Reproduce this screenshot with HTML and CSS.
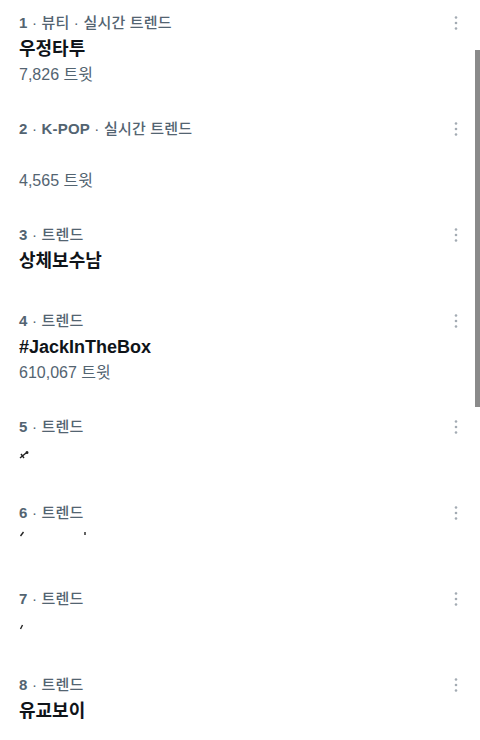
FILE: index.html
```html
<!DOCTYPE html>
<html lang="ko">
<head>
  <meta charset="UTF-8">
  <meta name="viewport" content="width=device-width, initial-scale=1.0">
  <title>트렌드</title>
  <link rel="stylesheet" href="styles.css">
</head>
<body>
  <ul class="trends">
    <li class="trend">
      <div class="trend-body">
        <div class="trend-meta"><span class="rank">1</span> · 뷰티 · 실시간 트렌드</div>
        <div class="trend-name">우정타투</div>
        <div class="trend-count">7,826 트윗</div>
      </div>
      <button class="more" aria-label="더 보기">
        <svg viewBox="0 0 6 16" width="6" height="16"><circle cx="3" cy="2.5" r="1.3"/><circle cx="3" cy="8" r="1.3"/><circle cx="3" cy="13.5" r="1.3"/></svg>
      </button>
    </li>

    <li class="trend">
      <div class="trend-body">
        <div class="trend-meta"><span class="rank">2</span> · <span class="rank">K-POP</span> · 실시간 트렌드</div>
        <div class="trend-name"></div>
        <div class="trend-count">4,565 트윗</div>
      </div>
      <button class="more" aria-label="더 보기">
        <svg viewBox="0 0 6 16" width="6" height="16"><circle cx="3" cy="2.5" r="1.3"/><circle cx="3" cy="8" r="1.3"/><circle cx="3" cy="13.5" r="1.3"/></svg>
      </button>
    </li>

    <li class="trend">
      <div class="trend-body">
        <div class="trend-meta"><span class="rank">3</span> · 트렌드</div>
        <div class="trend-name">상체보수남</div>
      </div>
      <button class="more" aria-label="더 보기">
        <svg viewBox="0 0 6 16" width="6" height="16"><circle cx="3" cy="2.5" r="1.3"/><circle cx="3" cy="8" r="1.3"/><circle cx="3" cy="13.5" r="1.3"/></svg>
      </button>
    </li>

    <li class="trend">
      <div class="trend-body">
        <div class="trend-meta"><span class="rank">4</span> · 트렌드</div>
        <div class="trend-name">#JackInTheBox</div>
        <div class="trend-count">610,067 트윗</div>
      </div>
      <button class="more" aria-label="더 보기">
        <svg viewBox="0 0 6 16" width="6" height="16"><circle cx="3" cy="2.5" r="1.3"/><circle cx="3" cy="8" r="1.3"/><circle cx="3" cy="13.5" r="1.3"/></svg>
      </button>
    </li>

    <li class="trend">
      <div class="trend-body">
        <div class="trend-meta"><span class="rank">5</span> · 트렌드</div>
        <div class="trend-name">
          <svg class="scrap" viewBox="0 0 80 32" width="80" height="32"><path d="M1 21 L7 16 M2 17 L5 21" /><circle cx="8" cy="15.5" r="0.8"/></svg>
        </div>
      </div>
      <button class="more" aria-label="더 보기">
        <svg viewBox="0 0 6 16" width="6" height="16"><circle cx="3" cy="2.5" r="1.3"/><circle cx="3" cy="8" r="1.3"/><circle cx="3" cy="13.5" r="1.3"/></svg>
      </button>
    </li>

    <li class="trend">
      <div class="trend-body">
        <div class="trend-meta"><span class="rank">6</span> · 트렌드</div>
        <div class="trend-name">
          <svg class="scrap" viewBox="0 0 80 32" width="80" height="32"><path d="M1.5 13 L4.5 9" /><path d="M66 9 L66 12" /></svg>
        </div>
      </div>
      <button class="more" aria-label="더 보기">
        <svg viewBox="0 0 6 16" width="6" height="16"><circle cx="3" cy="2.5" r="1.3"/><circle cx="3" cy="8" r="1.3"/><circle cx="3" cy="13.5" r="1.3"/></svg>
      </button>
    </li>

    <li class="trend">
      <div class="trend-body">
        <div class="trend-meta"><span class="rank">7</span> · 트렌드</div>
        <div class="trend-name">
          <svg class="scrap" viewBox="0 0 80 32" width="80" height="32"><path d="M1.5 20 L3.5 16" /></svg>
        </div>
      </div>
      <button class="more" aria-label="더 보기">
        <svg viewBox="0 0 6 16" width="6" height="16"><circle cx="3" cy="2.5" r="1.3"/><circle cx="3" cy="8" r="1.3"/><circle cx="3" cy="13.5" r="1.3"/></svg>
      </button>
    </li>

    <li class="trend">
      <div class="trend-body">
        <div class="trend-meta"><span class="rank">8</span> · 트렌드</div>
        <div class="trend-name">유교보이</div>
      </div>
      <button class="more" aria-label="더 보기">
        <svg viewBox="0 0 6 16" width="6" height="16"><circle cx="3" cy="2.5" r="1.3"/><circle cx="3" cy="8" r="1.3"/><circle cx="3" cy="13.5" r="1.3"/></svg>
      </button>
    </li>
  </ul>

  <div class="scrollbar"></div>
</body>
</html>
```

FILE: styles.css
```css
body {
  margin: 0;
  background: #fff;
  font-family: "Liberation Sans", "Noto Sans CJK KR", sans-serif;
  color: #0f1419;
  overflow: hidden;
}
.trends {
  list-style: none;
  margin: 0;
  padding: 0;
}
.trend {
  display: flex;
  align-items: flex-start;
  padding: 13px 20px 21px 19px;
}
.trend-body {
  flex: 1;
}
.trend-meta {
  font-size: 15px;
  line-height: 20px;
  font-weight: 500;
  letter-spacing: 0.2px;
  color: #536471;
}
.rank {
  font-weight: 700;
}
.trend-name {
  font-size: 18px;
  line-height: 32px;
  height: 32px;
  font-weight: 700;
  color: #0f1419;
}
.trend-count {
  font-size: 16px;
  line-height: 20px;
  color: #536471;
}
.scrap {
  display: block;
  stroke: #222;
  stroke-width: 1.4;
  fill: #222;
}
.more {
  border: none;
  background: none;
  padding: 0;
  margin-top: 2px;
  width: 8px;
  display: flex;
  justify-content: center;
}
.more svg {
  fill: #a3abb3;
}
.scrollbar {
  position: fixed;
  top: 50px;
  right: 0;
  width: 5px;
  height: 357px;
  background: #8a8a8a;
}
```
